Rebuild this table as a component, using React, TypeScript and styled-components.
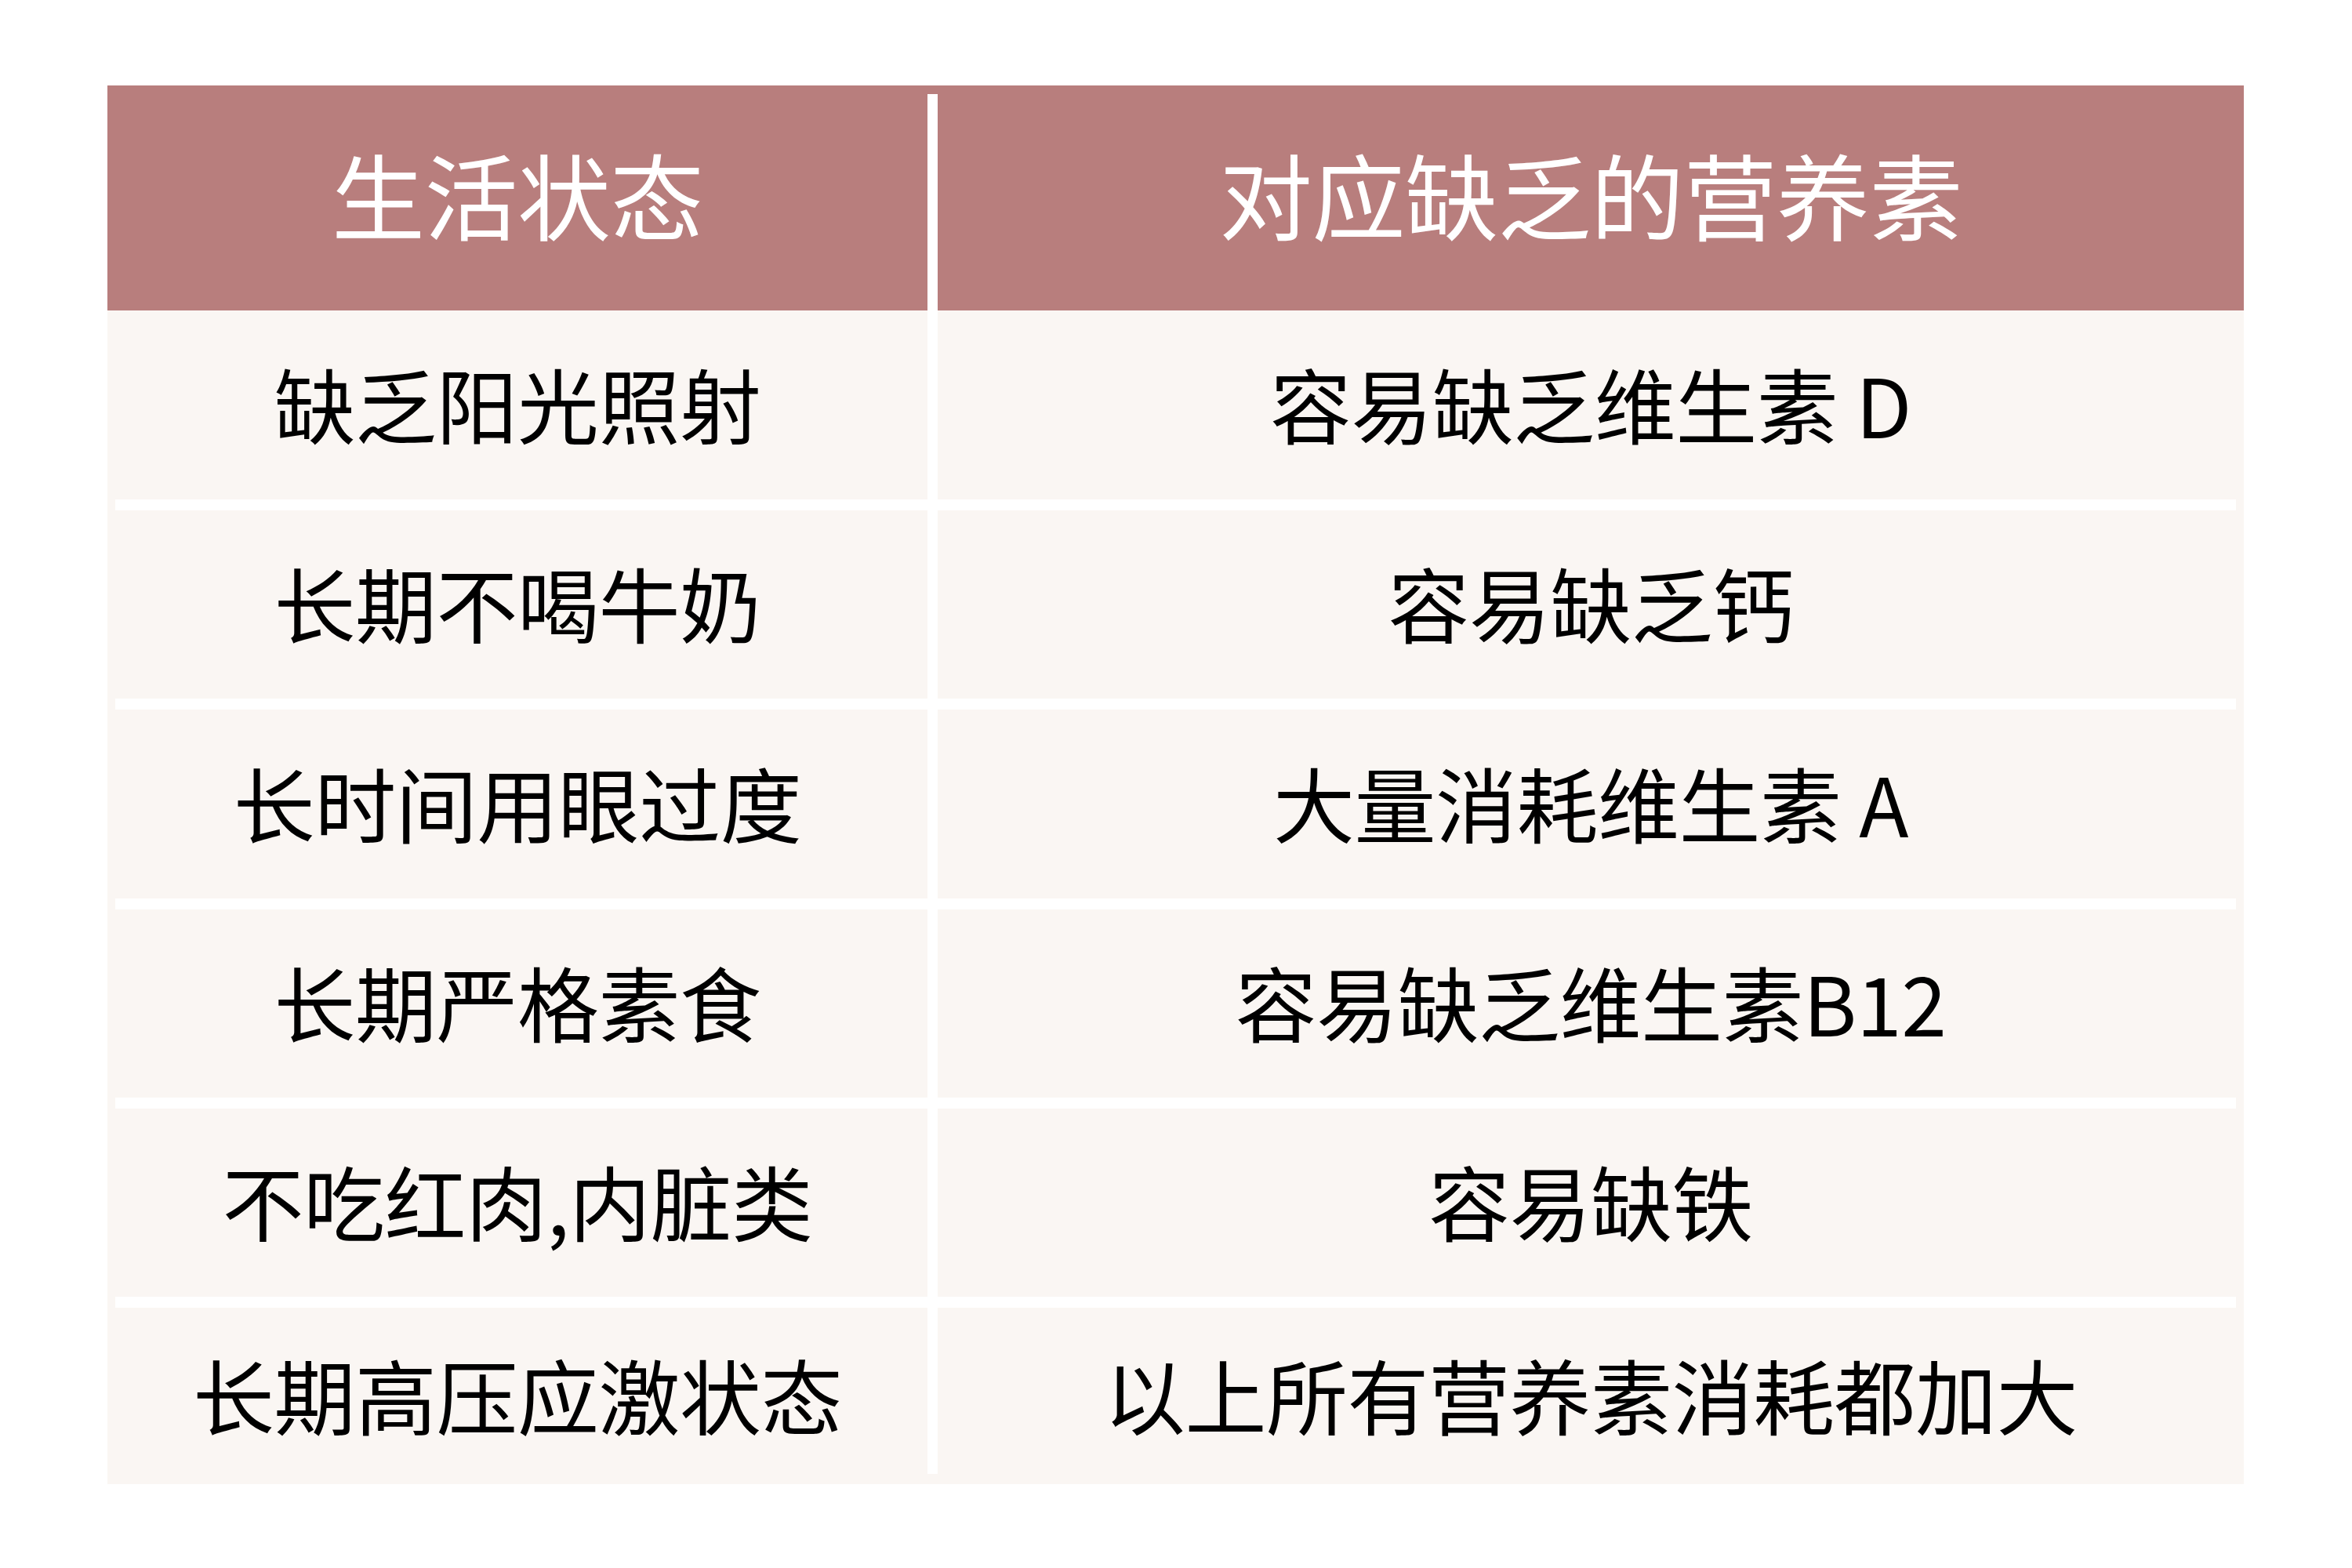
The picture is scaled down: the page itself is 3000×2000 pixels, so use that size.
import styled, { createGlobalStyle } from "styled-components";

const GlobalStyle = createGlobalStyle`
  body {
    margin: 0;
    background: #ffffff;
    font-family: "Noto Sans CJK SC", "Noto Sans", sans-serif;
  }
`;

const Page = styled.div`
  width: 3000px;
  height: 2000px;
  padding: 109px 0 0 137px;
  box-sizing: border-box;
`;

const Table = styled.div`
  position: relative;
  width: 2725px;
  background: #faf6f3;

  /* 中间的白色竖线 */
  &::after {
    content: "";
    position: absolute;
    left: 1046px;
    top: 11px;
    bottom: 13px;
    width: 13px;
    background: #ffffff;
  }
`;

const Row = styled.div<{ $height: number }>`
  display: grid;
  grid-template-columns: 1046px 1fr;
  column-gap: 13px;
  height: ${(p) => p.$height}px;
`;

const HeadRow = styled(Row)`
  background: #b87e7d;
`;

const Cell = styled.div`
  display: flex;
  align-items: center;
  justify-content: center;
  padding-bottom: 6px;
  font-size: 104px;
  letter-spacing: -0.5px;
  line-height: 1;
  color: #000000;
  white-space: pre;
`;

const HeadCell = styled(Cell)`
  padding-bottom: 12px;
  font-size: 119px;
  color: #ffffff;
`;

const Divider = styled.div`
  height: 14px;
  margin: 0 10px;
  background: #ffffff;
`;

type Item = {
  state: string;
  nutrient: string;
  height: number;
};

const items: Item[] = [
  { state: "缺乏阳光照射", nutrient: "容易缺乏维生素 D", height: 241 },
  { state: "长期不喝牛奶", nutrient: "容易缺乏钙", height: 240 },
  { state: "长时间用眼过度", nutrient: "大量消耗维生素 A", height: 241 },
  { state: "长期严格素食", nutrient: "容易缺乏维生素B12", height: 240 },
  { state: "不吃红肉,内脏类", nutrient: "容易缺铁", height: 240 },
  { state: "长期高压应激状态", nutrient: "以上所有营养素消耗都加大", height: 225 },
];

export default function App() {
  return (
    <Page>
      <GlobalStyle />
      <Table>
        <HeadRow $height={287}>
          <HeadCell>生活状态</HeadCell>
          <HeadCell>对应缺乏的营养素</HeadCell>
        </HeadRow>
        {items.map((item, i) => (
          <div key={item.state}>
            {i > 0 && <Divider />}
            <Row $height={item.height}>
              <Cell>{item.state}</Cell>
              <Cell>{item.nutrient}</Cell>
            </Row>
          </div>
        ))}
      </Table>
    </Page>
  );
}
